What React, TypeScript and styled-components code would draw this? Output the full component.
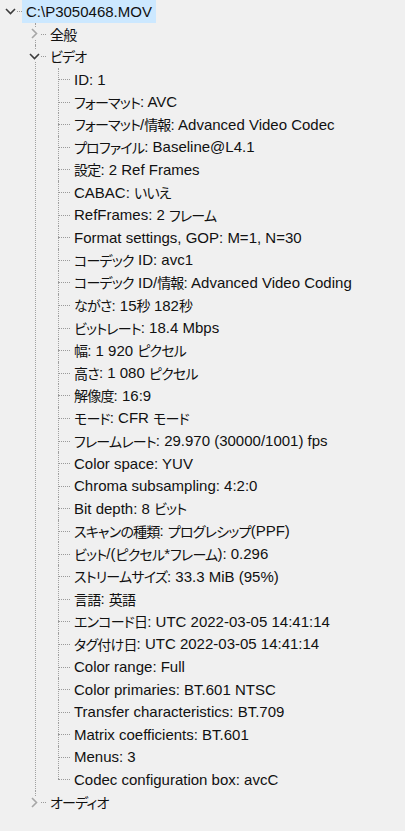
import styled, { createGlobalStyle } from "styled-components";

const GlobalStyle = createGlobalStyle`
  html, body {
    margin: 0;
    padding: 0;
    background: #f0f0f0;
  }
  body {
    font-family: "Liberation Sans", "Noto Sans CJK JP", sans-serif;
    font-size: 15px;
    color: #111;
  }
`;

type Node = {
  label: string;
  expanded?: boolean;
  children?: Node[];
  selected?: boolean;
};

const videoItems = [
  "ID: 1",
  "フォーマット: AVC",
  "フォーマット/情報: Advanced Video Codec",
  "プロファイル: Baseline@L4.1",
  "設定: 2 Ref Frames",
  "CABAC: いいえ",
  "RefFrames: 2 フレーム",
  "Format settings, GOP: M=1, N=30",
  "コーデック ID: avc1",
  "コーデック ID/情報: Advanced Video Coding",
  "ながさ: 15秒 182秒",
  "ビットレート: 18.4 Mbps",
  "幅: 1 920 ピクセル",
  "高さ: 1 080 ピクセル",
  "解像度: 16:9",
  "モード: CFR モード",
  "フレームレート: 29.970 (30000/1001) fps",
  "Color space: YUV",
  "Chroma subsampling: 4:2:0",
  "Bit depth: 8 ビット",
  "スキャンの種類: プログレシップ(PPF)",
  "ビット/(ピクセル*フレーム): 0.296",
  "ストリームサイズ: 33.3 MiB (95%)",
  "言語: 英語",
  "エンコード日: UTC 2022-03-05 14:41:14",
  "タグ付け日: UTC 2022-03-05 14:41:14",
  "Color range: Full",
  "Color primaries: BT.601 NTSC",
  "Transfer characteristics: BT.709",
  "Matrix coefficients: BT.601",
  "Menus: 3",
  "Codec configuration box: avcC",
];

const tree: Node = {
  label: "C:\\P3050468.MOV",
  expanded: true,
  selected: true,
  children: [
    { label: "全般", expanded: false, children: [] },
    {
      label: "ビデオ",
      expanded: true,
      children: videoItems.map((label) => ({ label })),
    },
    { label: "オーディオ", expanded: false, children: [] },
  ],
};

const ROW = 22.6;
const INDENT = 24;
const CJK = /([\u3000-\u30ff\u4e00-\u9fff\uff00-\uffef]+)/;

const TreeList = styled.ul`
  list-style: none;
  margin: 0;
  padding: 0;
`;

const Item = styled.li<{ $level: number; $last: boolean; $line: boolean }>`
  position: relative;

  &::before {
    content: "";
    display: ${(p) => (p.$line ? "block" : "none")};
    position: absolute;
    left: ${(p) => p.$level * INDENT + 10 + (p.$level === 1 ? 1 : 0)}px;
    top: 0;
    height: ${(p) => (p.$last ? `${ROW / 2}px` : "100%")};
    border-left: 1px dotted #a0a0a0;
  }
`;

const Row = styled.div<{ $level: number }>`
  position: relative;
  height: ${ROW}px;
  display: flex;
  align-items: center;
  padding-left: ${(p) => p.$level * INDENT}px;
`;

const Gutter = styled.div`
  position: relative;
  width: 20px;
  height: 100%;
  flex: none;
  display: flex;
  align-items: center;
  justify-content: center;
`;

const Connector = styled.span<{ $from: number }>`
  position: absolute;
  left: ${(p) => p.$from}px;
  right: -2px;
  top: 50%;
  border-top: 1px dotted #999;
`;

const Expander = styled.span`
  position: relative;
  z-index: 1;
  width: 12px;
  height: 12px;
  display: flex;
  align-items: center;
  justify-content: center;
  background: #f0f0f0;
`;

const Label = styled.span<{ $selected?: boolean }>`
  margin-left: 2px;
  height: 100%;
  display: flex;
  align-items: center;
  padding: 0 4px;
  white-space: pre;
  background: ${(p) => (p.$selected ? "#cce8ff" : "transparent")};
`;

const Jp = styled.span`
  font-size: 14px;
  letter-spacing: -0.8px;
  font-feature-settings: "palt";
`;

function Text({ value }: { value: string }) {
  return (
    <>
      {value
        .split(CJK)
        .filter((part) => part !== "")
        .map((part, i) =>
          CJK.test(part) ? <Jp key={i}>{part}</Jp> : <span key={i}>{part}</span>
        )}
    </>
  );
}

function Chevron({ open }: { open: boolean }) {
  return open ? (
    <svg width="11" height="7" viewBox="0 0 11 7">
      <polyline
        points="1,1 5.5,5.5 10,1"
        fill="none"
        stroke="#3c3c3c"
        strokeWidth="1.6"
      />
    </svg>
  ) : (
    <svg width="7" height="11" viewBox="0 0 7 11">
      <polyline
        points="1,1 5.5,5.5 1,10"
        fill="none"
        stroke="#a6a6a6"
        strokeWidth="1.6"
      />
    </svg>
  );
}

function TreeNode({
  node,
  level,
  last,
  line,
}: {
  node: Node;
  level: number;
  last: boolean;
  line: boolean;
}) {
  const hasExpander = node.children !== undefined;
  return (
    <Item $level={level} $last={last} $line={line}>
      <Row $level={level}>
        <Gutter>
          <Connector $from={hasExpander ? 15 : 10} />
          {hasExpander && (
            <Expander>
              <Chevron open={!!node.expanded} />
            </Expander>
          )}
        </Gutter>
        <Label $selected={node.selected}>
          <Text value={node.label} />
        </Label>
      </Row>
      {node.expanded && node.children && node.children.length > 0 && (
        <TreeList>
          {node.children.map((child, i) => (
            <TreeNode
              key={child.label}
              node={child}
              level={level + 1}
              last={i === node.children!.length - 1}
              line={true}
            />
          ))}
        </TreeList>
      )}
    </Item>
  );
}

export default function App() {
  return (
    <>
      <GlobalStyle />
      <TreeList>
        <TreeNode node={tree} level={0} last={true} line={false} />
      </TreeList>
    </>
  );
}
